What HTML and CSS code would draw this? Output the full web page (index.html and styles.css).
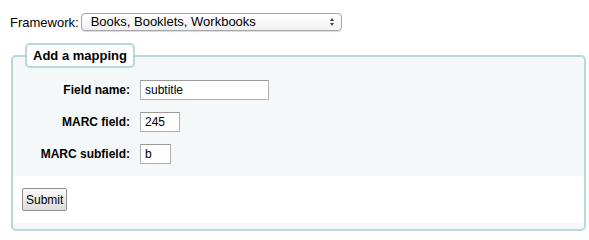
FILE: index.html
```html
<!DOCTYPE html>
<html lang="en">
<head>
    <meta charset="UTF-8">
    <title>Keyword to MARC mapping</title>
    <link rel="stylesheet" href="styles.css">
</head>
<body>
    <form class="framework-form">
        <label for="framework">Framework:</label>
        <span class="select-wrap">
            <select id="framework" class="select-field">
                <option>Books, Booklets, Workbooks</option>
            </select>
        </span>
    </form>

    <form class="mapping-form">
        <fieldset class="rows">
            <legend>Add a mapping</legend>
            <ol>
                <li>
                    <label for="fieldname">Field name:</label>
                    <input type="text" id="fieldname" class="input-field wide" value="subtitle">
                </li>
                <li>
                    <label for="marcfield">MARC field:</label>
                    <input type="text" id="marcfield" class="input-field medium" value="245">
                </li>
                <li>
                    <label for="marcsubfield">MARC subfield:</label>
                    <input type="text" id="marcsubfield" class="input-field small" value="b">
                </li>
            </ol>
            <div class="action">
                <button type="submit" class="submit-button">Submit</button>
            </div>
        </fieldset>
    </form>
</body>
</html>
```

FILE: styles.css
```css
body {
    margin: 0;
    padding: 0;
    background-color: #fff;
    color: #000;
    font-family: 'Liberation Sans', Arial, sans-serif;
    font-size: 13px;
}

.framework-form {
    display: flex;
    align-items: center;
    gap: 2px;
    margin: 13px 0 0 10px;
    height: 18px;
}

.select-wrap {
    position: relative;
    display: inline-block;
}

.select-field {
    appearance: none;
    -webkit-appearance: none;
    width: 261px;
    height: 18px;
    margin: 0;
    padding: 0 0 0 9px;
    border: 1px solid #a6a6a6;
    border-radius: 4px;
    background: linear-gradient(#ffffff, #f1f1f1);
    box-shadow: 0 1px 1px rgba(0, 0, 0, 0.15);
    font-family: 'Liberation Sans', Arial, sans-serif;
    font-size: 13px;
    color: #000;
    line-height: 16px;
}

.select-wrap::after {
    content: "";
    position: absolute;
    right: 8px;
    top: 5px;
    width: 0;
    height: 0;
    border-left: 2.5px solid transparent;
    border-right: 2.5px solid transparent;
    border-bottom: 3px solid #444;
    pointer-events: none;
}

.select-wrap::before {
    content: "";
    position: absolute;
    right: 8px;
    top: 10px;
    width: 0;
    height: 0;
    border-left: 2.5px solid transparent;
    border-right: 2.5px solid transparent;
    border-top: 3px solid #444;
    pointer-events: none;
}

.mapping-form {
    margin: 12px 3px 0 11px;
}

fieldset.rows {
    margin: 0;
    padding: 0 0 6px 0;
    border: 2px solid #b9d8d9;
    border-radius: 5px;
    background-color: #f4f8f9;
}

fieldset.rows legend {
    margin-left: 12px;
    padding: 3px 6px;
    border: 2px solid #b9d8d9;
    border-radius: 5px;
    background-color: #fff;
    font-weight: bold;
    font-size: 13px;
}

fieldset.rows ol {
    list-style: none;
    margin: 0;
    padding: 12px 0 12px 0;
}

fieldset.rows li {
    display: grid;
    grid-template-columns: 117px auto;
    column-gap: 10px;
    align-items: center;
    margin-bottom: 12px;
}

fieldset.rows li:last-child {
    margin-bottom: 0;
}

fieldset.rows label {
    text-align: right;
    font-weight: bold;
    font-size: 12px;
}

.input-field {
    height: 20px;
    box-sizing: border-box;
    margin: 0;
    padding: 0 4px;
    border: 1px solid #b0b0b0;
    border-top-color: #9a9a9a;
    font-family: 'Liberation Sans', Arial, sans-serif;
    font-size: 12px;
    color: #000;
    background: #fff;
}

.input-field.wide {
    width: 129px;
}

.input-field.medium {
    width: 40px;
}

.input-field.small {
    width: 31px;
}

.action {
    background-color: #fff;
    border-radius: 4px;
    padding: 12px 9px 12px;
}

.submit-button {
    height: 23px;
    padding: 0 3px;
    border: 1px solid #8f8f8f;
    border-radius: 2px;
    background: linear-gradient(#fafafa, #dcdcdc);
    font-family: 'Liberation Sans', Arial, sans-serif;
    font-size: 12px;
    color: #000;
}
```
